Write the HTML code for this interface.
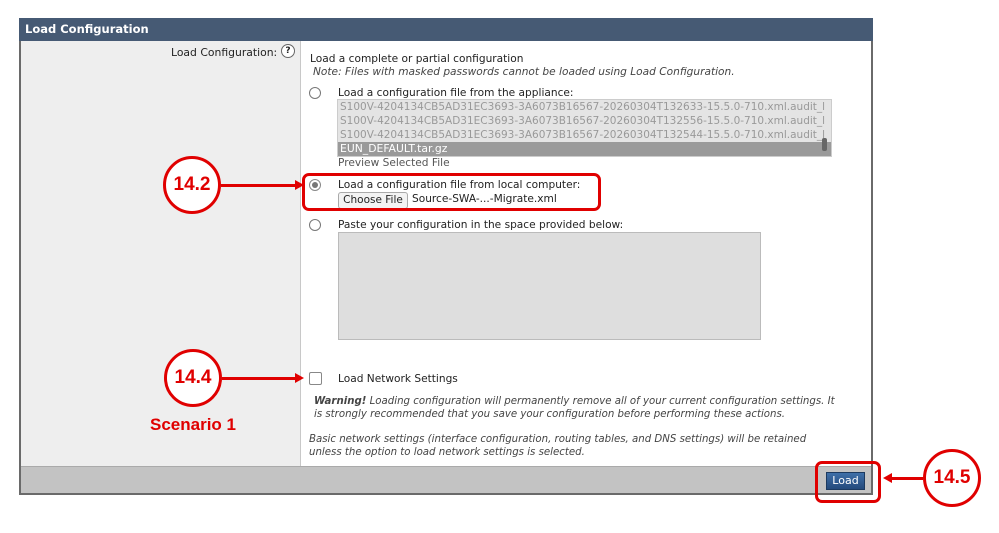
<!DOCTYPE html>
<html><head><meta charset="utf-8"><style>
*{margin:0;padding:0;box-sizing:border-box}
body{width:999px;height:533px;background:#fff;position:relative;overflow:hidden;font-family:"DejaVu Sans","Liberation Sans",sans-serif;font-size:10.6px;color:#222}
.a{position:absolute;white-space:nowrap}
.rad{position:absolute;width:12px;height:12px;border:1px solid #777;border-radius:50%;background:#fff}
.circ{position:absolute;width:58px;height:58px;border:3px solid #e00000;border-radius:50%;color:#e00000;font-family:"Liberation Sans",sans-serif;font-weight:bold;font-size:19px;text-align:center;line-height:52px;background:#fff}
.line{position:absolute;height:3px;background:#e00000}
.head{position:absolute;width:0;height:0;border-top:5px solid transparent;border-bottom:5px solid transparent}
</style></head><body>
<div class="a" style="left:19px;top:18px;width:854px;height:477px;border:2px solid #6a6a6a;border-top:none;background:#fff"></div>
<div class="a" style="left:19px;top:18px;width:854px;height:23px;background:#465a74;color:#fff;font-weight:bold;font-size:11.5px;line-height:23px;padding-left:6px">Load Configuration</div>
<div class="a" style="left:21px;top:41px;width:280px;height:426px;background:#eeeeee;border-right:1px solid #c8c8c8"></div>
<div class="a" style="left:21px;top:466px;width:850px;height:27px;background:#c3c3c3;border-top:1px solid #aaa"></div>
<div class="a" style="left:171px;top:46px;font-size:10.8px">Load Configuration:</div>
<div class="a" style="left:281px;top:44px;width:14px;height:14px;border:1px solid #666;border-radius:50%;font-size:9px;font-weight:bold;text-align:center;line-height:12px;background:#fff">?</div>

<div class="a" style="left:310px;top:53px">Load a complete or partial configuration</div>
<div class="a" style="left:313px;top:66px;font-style:italic;color:#444">Note: Files with masked passwords cannot be loaded using Load Configuration.</div>
<div class="rad" style="left:309px;top:87px"></div>
<div class="a" style="left:338px;top:87px">Load a configuration file from the appliance:</div>
<div class="a" style="left:337px;top:99px;width:495px;height:58px;background:#e4e4e4;border:1px solid #ccc;overflow:hidden;color:#999;font-size:10.5px;line-height:14px;padding-left:2px">
S100V-4204134CB5AD31EC3693-3A6073B16567-20260304T132633-15.5.0-710.xml.audit_l<br>S100V-4204134CB5AD31EC3693-3A6073B16567-20260304T132556-15.5.0-710.xml.audit_l<br>S100V-4204134CB5AD31EC3693-3A6073B16567-20260304T132544-15.5.0-710.xml.audit_l</div>
<div class="a" style="left:338px;top:142px;width:493px;height:14px;background:#9a9a9a;color:#fff;font-size:10.8px;line-height:14px;padding-left:2px">EUN_DEFAULT.tar.gz</div>
<div class="a" style="left:822px;top:138px;width:5px;height:13px;background:#666;border-radius:2px"></div>
<div class="a" style="left:338px;top:157px;color:#555">Preview Selected File</div>

<div class="rad" style="left:309px;top:179px;border-color:#888"><div style="position:absolute;left:2px;top:2px;width:6px;height:6px;border-radius:50%;background:#777"></div></div>
<div class="a" style="left:338px;top:179px">Load a configuration file from local computer:</div>
<div class="a" style="left:338px;top:192px;width:70px;height:17px;border:1px solid #aaa;border-radius:3px;background:#f3f3f3;text-align:center;line-height:15px;font-size:10.5px">Choose File</div>
<div class="a" style="left:412px;top:193px">Source-SWA-...-Migrate.xml</div>
<div class="a" style="left:302px;top:173px;width:299px;height:38px;border:3px solid #e00000;border-radius:7px"></div>

<div class="rad" style="left:309px;top:219px"></div>
<div class="a" style="left:338px;top:219px">Paste your configuration in the space provided below:</div>
<div class="a" style="left:338px;top:232px;width:423px;height:108px;background:#dedede;border:1px solid #bbb"></div>

<div class="a" style="left:309px;top:372px;width:13px;height:13px;border:1px solid #888;border-radius:2px;background:#fff"></div>
<div class="a" style="left:338px;top:373px">Load Network Settings</div>
<div class="a" style="left:314px;top:395px;font-style:italic;color:#444;line-height:13px;font-size:10.2px"><b>Warning!</b> Loading configuration will permanently remove all of your current configuration settings. It<br>is strongly recommended that you save your configuration before performing these actions.</div>
<div class="a" style="left:309px;top:433px;font-style:italic;color:#444;line-height:13px;font-size:10.2px">Basic network settings (interface configuration, routing tables, and DNS settings) will be retained<br>unless the option to load network settings is selected.</div>

<div class="a" style="left:826px;top:472px;width:39px;height:18px;background:linear-gradient(#3f6fa8,#244a7c);border:1px solid #1c3a60;color:#fff;text-align:center;line-height:16px;font-size:11px">Load</div>
<div class="a" style="left:815px;top:461px;width:66px;height:42px;border:3px solid #e00000;border-radius:7px"></div>

<div class="circ" style="left:163px;top:156px">14.2</div>
<div class="line" style="left:221px;top:184px;width:74px"></div>
<div class="head" style="left:295px;top:180px;border-left:9px solid #e00000"></div>

<div class="circ" style="left:164px;top:349px">14.4</div>
<div class="line" style="left:222px;top:377px;width:73px"></div>
<div class="head" style="left:295px;top:373px;border-left:9px solid #e00000"></div>
<div class="a" style="left:150px;top:415px;color:#e00000;font-family:'Liberation Sans',sans-serif;font-weight:bold;font-size:17px">Scenario 1</div>

<div class="circ" style="left:923px;top:449px">14.5</div>
<div class="line" style="left:892px;top:477px;width:31px"></div>
<div class="head" style="left:883px;top:473px;border-right:9px solid #e00000"></div>
</body></html>
